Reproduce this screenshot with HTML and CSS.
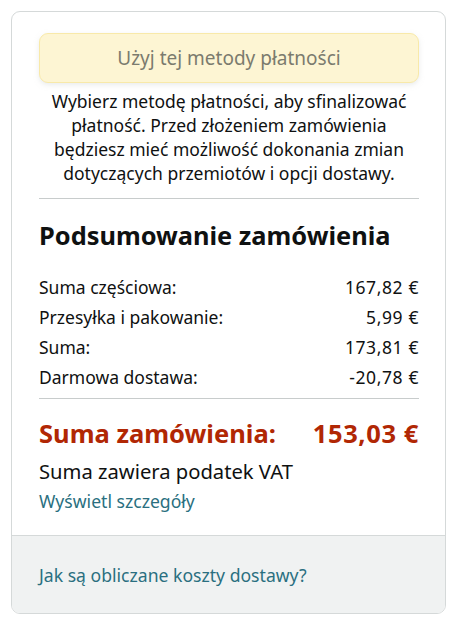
FILE: index.html
```html
<!DOCTYPE html>
<html lang="pl">
<head>
<meta charset="utf-8">
<link rel="stylesheet" href="styles.css">
</head>
<body>
<div class="card">
  <div class="main">
    <div class="btn">Użyj tej metody płatności</div>
    <p class="note">Wybierz metodę płatności, aby sfinalizować płatność. Przed złożeniem zamówienia będziesz mieć możliwość dokonania zmian dotyczących przemiotów i opcji dostawy.</p>
    <hr class="rule">
    <h2 class="title">Podsumowanie zamówienia</h2>
    <div class="rows">
      <div class="row"><span>Suma częściowa:</span><span class="num">167,82 €</span></div>
      <div class="row"><span>Przesyłka i pakowanie:</span><span class="num">5,99 €</span></div>
      <div class="row"><span>Suma:</span><span class="num">173,81 €</span></div>
      <div class="row"><span>Darmowa dostawa:</span><span class="num">-20,78 €</span></div>
    </div>
    <hr class="rule rule2">
    <div class="total"><span>Suma zamówienia:</span><span class="num">153,03 €</span></div>
    <div class="vat">Suma zawiera podatek VAT</div>
    <a class="link details">Wyświetl szczegóły</a>
  </div>
  <div class="foot">
    <a class="link">Jak są obliczane koszty dostawy?</a>
  </div>
</div>
</body>
</html>
```
FILE: styles.css
```css
* { box-sizing: border-box; }
body {
  margin: 0;
  padding: 11px;
  background: #fff;
  font-family: "Noto Sans", "Liberation Sans", sans-serif;
  color: #0f1111;
}
.card {
  width: 435px;
  border: 1px solid #d5d9d9;
  border-radius: 9px;
  overflow: hidden;
}
.main {
  padding: 21px 26px 22px 27px;
}
.btn {
  height: 50px;
  display: flex;
  align-items: center;
  justify-content: center;
  background: #fdf5d3;
  border: 1px solid #f8e9a9;
  border-radius: 9px;
  box-shadow: 0 2px 5px rgba(213, 217, 217, 0.5);
  color: #7b7b6e;
  font-size: 19px;
}
.note {
  margin: 6px 0 0;
  text-align: center;
  font-size: 17.5px;
  line-height: 24px;
  padding: 0 4px;
}
.rule {
  border: 0;
  border-top: 1px solid #c8cccc;
  margin: 13px 0 0;
}
.title {
  margin: 20px 0 0;
  font-size: 25.4px;
  line-height: 32px;
  font-weight: 700;
}
.rows {
  margin-top: 24px;
  display: flex;
  flex-direction: column;
  gap: 6px;
}
.row {
  display: flex;
  justify-content: space-between;
  font-size: 17.5px;
  line-height: 24px;
}
.num { letter-spacing: 0.6px; }
.rule2 { margin-top: 9px; }
.total {
  margin-top: 19px;
  display: flex;
  justify-content: space-between;
  color: #b12704;
  font-size: 25.5px;
  line-height: 30px;
  font-weight: 700;
}
.vat {
  margin-top: 10px;
  font-size: 20.2px;
  line-height: 26px;
}
.link {
  color: #2a6f80;
  font-size: 17.6px;
  line-height: 24px;
  display: block;
}
.details { margin-top: 5px; }
.foot {
  background: #f0f2f2;
  border-top: 1px solid #d5d9d9;
  padding: 27px 27px 26px;
}
```
